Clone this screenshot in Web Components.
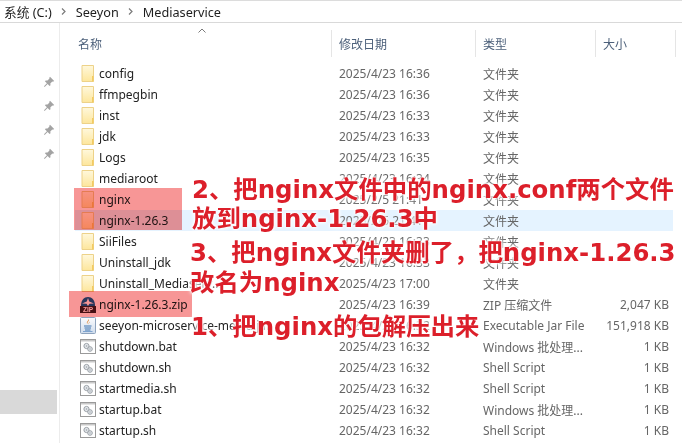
<!DOCTYPE html>
<html lang="zh">
<head>
<meta charset="utf-8">
<title>Mediaservice</title>
<style>
	html, body { margin: 0; padding: 0; background: #fff; }
	body { font-family: "Noto Sans", "Noto Sans CJK SC", sans-serif; overflow: hidden; }
</style>
</head>
<body>
<explorer-window>
	<address-bar slot="address"></address-bar>
	<nav-pane slot="nav"></nav-pane>
	<file-header slot="header"></file-header>
	<file-row icon="folder" name="config" date="2025/4/23 16:36" type="文件夹"></file-row>
	<file-row icon="folder" name="ffmpegbin" date="2025/4/23 16:36" type="文件夹"></file-row>
	<file-row icon="folder" name="inst" date="2025/4/23 16:33" type="文件夹"></file-row>
	<file-row icon="folder" name="jdk" date="2025/4/23 16:33" type="文件夹"></file-row>
	<file-row icon="folder" name="Logs" date="2025/4/23 16:35" type="文件夹"></file-row>
	<file-row icon="folder" name="mediaroot" date="2025/4/23 16:34" type="文件夹"></file-row>
	<file-row icon="folder" name="nginx" date="2025/2/5 21:41" type="文件夹"></file-row>
	<file-row icon="folder" name="nginx-1.26.3" date="2025/2/5 21:41" type="文件夹" hover></file-row>
	<file-row icon="folder" name="SiiFiles" date="2025/4/23 16:33" type="文件夹"></file-row>
	<file-row icon="folder" name="Uninstall_jdk" date="2025/4/23 16:33" type="文件夹"></file-row>
	<file-row icon="folder" name="Uninstall_Mediaserv..." date="2025/4/23 17:00" type="文件夹"></file-row>
	<file-row icon="zip" name="nginx-1.26.3.zip" date="2025/4/23 16:39" type="ZIP 压缩文件" size="2,047 KB"></file-row>
	<file-row icon="jar" name="seeyon-microservice-media.jar" date="2025/4/23 16:32" type="Executable Jar File" size="151,918 KB"></file-row>
	<file-row icon="script" name="shutdown.bat" date="2025/4/23 16:32" type="Windows 批处理..." size="1 KB"></file-row>
	<file-row icon="script" name="shutdown.sh" date="2025/4/23 16:32" type="Shell Script" size="1 KB"></file-row>
	<file-row icon="script" name="startmedia.sh" date="2025/4/23 16:32" type="Shell Script" size="1 KB"></file-row>
	<file-row icon="script" name="startup.bat" date="2025/4/23 16:32" type="Windows 批处理..." size="1 KB"></file-row>
	<file-row icon="script" name="startup.sh" date="2025/4/23 16:32" type="Shell Script" size="1 KB"></file-row>
	<mark-box slot="marks" x="74" y="188" w="108" h="42"></mark-box>
	<mark-box slot="marks" x="69" y="291" w="123" h="26"></mark-box>
	<note-label slot="marks" x="192" y="174">2、把nginx文件中的nginx.conf两个文件</note-label>
	<note-label slot="marks" x="192" y="203">放到nginx-1.26.3中</note-label>
	<note-label slot="marks" x="190" y="237">3、把nginx文件夹删了，把nginx-1.26.3</note-label>
	<note-label slot="marks" x="190" y="267">改名为nginx</note-label>
	<note-label slot="marks" x="191" y="311">1、把nginx的包解压出来</note-label>
</explorer-window>

<script>
const PIN = `<svg width="12" height="12" viewBox="0 0 12 12" aria-hidden="true"><path d="M7 .8l4.200 4.200-1.200.7-.7-.3-2 2 .2 1.800-.9.8-2-2-3 2.900-.6-.6 2.900-3-2-2 .8-.9 1.800.2 2-2-.3-.7z" fill="#a3a3a3"/></svg>`

const ICONS = {
	folder: `<svg width="14" height="17" viewBox="0 0 14 17" aria-hidden="true">
		<defs><linearGradient id="f" x1="0" y1="0" x2="0" y2="1"><stop offset="0" stop-color="#fff8dc"/><stop offset="1" stop-color="#fde69c"/></linearGradient></defs>
		<path d="M1 .5h11.500v16H1z" fill="url(#f)" stroke="#edd289"/>
		<path d="M11 11h1.500v5.500H11z" fill="#f3cb62"/>
	</svg>`,
	zip: `<svg width="16" height="17" viewBox="0 0 16 17" aria-hidden="true">
		<path d="M1 10C1 4 4 1 8 1s7 3 7 9z" fill="#2a5c9a"/>
		<path d="M8 2l1.200 3.500L14 7.500l-4.600.2L8 10 6.600 7.700 2 7.500l4.800-2z" fill="#fff"/>
		<rect x="0" y="10" width="16" height="7" fill="#4a1a20"/>
		<text x="8" y="16" text-anchor="middle" font-family="Liberation Sans, sans-serif" font-size="6.500" font-weight="700" fill="#fff">ZIP</text>
	</svg>`,
	jar: `<svg width="16" height="17" viewBox="0 0 16 17" aria-hidden="true">
		<defs><linearGradient id="j" x1="0" y1="0" x2="0" y2="1"><stop offset="0" stop-color="#fbfcfe"/><stop offset="1" stop-color="#cfdcec"/></linearGradient></defs>
		<rect x=".5" y=".5" width="15" height="16" rx="1" fill="url(#j)" stroke="#8ea3bd"/>
		<path d="M8.500 2C10 4 6.500 5 7.500 7c-2-1.500 1-3 1-5zM10 4.500C9.500 6 8.500 6 9 7.500 8 6.500 9 5.500 10 4.500z" fill="#dd7a1e"/>
		<path d="M4 9h7.500M4.500 11h6.500M5 13h5.500" stroke="#3f74b0" stroke-width="1.100" fill="none"/>
		<path d="M3 14.500h9.500" stroke="#7fa4cf" stroke-width="1"/>
	</svg>`,
	script: `<svg width="16" height="15" viewBox="0 0 16 15" aria-hidden="true">
		<rect x=".5" y=".5" width="15" height="14" fill="#fff" stroke="#9a9a9a"/>
		<rect x="1" y="1" width="14" height="1.500" fill="#c9c9c9"/>
		<circle cx="6.500" cy="7" r="2.600" fill="#e4e8ec" stroke="#9aa0a6"/>
		<circle cx="10" cy="10" r="2.300" fill="#e4e8ec" stroke="#9aa0a6"/>
		<circle cx="6.500" cy="7" r=".8" fill="#9aa0a6"/>
		<circle cx="10" cy="10" r=".7" fill="#9aa0a6"/>
	</svg>`
}

class ExplorerWindow extends HTMLElement {
	constructor() {
		super()
		this.attachShadow({ mode: 'open' })
		this.shadowRoot.innerHTML = `
			<style>
				:host { display: block; position: relative; width: 682px; height: 443px; overflow: hidden; background: #fff; }
				.main { display: flex; }
				.list { flex: 1; display: flex; flex-direction: column; }
				.rows { display: flex; flex-direction: column; padding-left: 15px; padding-right: 9px; }
			</style>
			<slot name="address"></slot>
			<div class="main">
				<slot name="nav"></slot>
				<div class="list">
					<slot name="header"></slot>
					<div class="rows"><slot></slot></div>
				</div>
			</div>
			<slot name="marks"></slot>
		`
	}
}

class AddressBar extends HTMLElement {
	constructor() {
		super()
		this.attachShadow({ mode: 'open' })
		this.shadowRoot.innerHTML = `
			<style>
				:host { display: flex; align-items: center; box-sizing: border-box; height: 23px; padding-left: 4px; border-top: 1px solid #dcdcdc; border-bottom: 1px solid #d9d9d9; font-size: 12.7px; color: #1e1e1e; }
				svg { margin: 0 10px 0 9px; }
			</style>
			<span>系统 (C:)</span>
			<svg width="5" height="7" viewBox="0 0 5 7"><path d="M1 .5L4 3.500 1 6.500" fill="none" stroke="#7a7a7a" stroke-width="1.200"/></svg>
			<span>Seeyon</span>
			<svg width="5" height="7" viewBox="0 0 5 7"><path d="M1 .5L4 3.500 1 6.500" fill="none" stroke="#7a7a7a" stroke-width="1.200"/></svg>
			<span>Mediaservice</span>
		`
	}
}

class NavPane extends HTMLElement {
	constructor() {
		super()
		this.attachShadow({ mode: 'open' })
		this.shadowRoot.innerHTML = `
			<style>
				:host { display: flex; flex-direction: column; box-sizing: border-box; width: 60px; height: 420px; border-right: 1px solid #ececec; }
				.pins { display: flex; flex-direction: column; align-items: flex-end; gap: 12px; padding: 53px 4px 0 0; margin-top: -5px; }
				.pins span { display: block; height: 12px; }
				.selected { width: 57px; height: 24px; margin-top: 235px; background: #d9d9d9; }
			</style>
			<div class="pins">
				<span>${PIN}</span><span>${PIN}</span><span>${PIN}</span><span>${PIN}</span>
			</div>
			<div class="selected"></div>
		`
	}
}

class FileHeader extends HTMLElement {
	constructor() {
		super()
		this.attachShadow({ mode: 'open' })
		this.shadowRoot.innerHTML = `
			<style>
				:host { display: block; position: relative; box-sizing: border-box; height: 40px; padding-top: 7px; font-size: 12px; color: #4c607a; }
				.cols { display: grid; grid-template-columns: 272px 144px 120px 80px; height: 27px; }
				.cols > div { display: flex; align-items: center; padding-left: 7px; border-right: 1px solid #e5e5e5; box-sizing: border-box; }
				.cols > div:first-child { padding-left: 18px; }
				.caret { position: absolute; left: 138px; top: 5px; }
			</style>
			<svg class="caret" width="8" height="5" viewBox="0 0 8 5"><path d="M.5 4.500L4 1l3.500 3.500" fill="none" stroke="#7a7a7a"/></svg>
			<div class="cols"><div>名称</div><div>修改日期</div><div>类型</div><div>大小</div></div>
		`
	}
}

class FileRow extends HTMLElement {
	constructor() {
		super()
		this.attachShadow({ mode: 'open' })
	}

	connectedCallback() {
		const a = name => this.getAttribute(name) || ''
		this.shadowRoot.innerHTML = `
			<style>
				:host { display: grid; grid-template-columns: 24px 240px 144px 114px 76px; align-items: center; height: 21px; font-size: 12px; color: #666; white-space: nowrap; }
				:host([hover]) { background: #e5f3ff; }
				.icon { display: flex; justify-content: center; padding-left: 1px; }
				.name { color: #222; overflow: visible; }
				.size { text-align: right; padding-right: 4px; }
			</style>
			<div class="icon">${ICONS[a('icon')] || ''}</div>
			<div class="name">${a('name')}</div>
			<div class="date">${a('date')}</div>
			<div class="type">${a('type')}</div>
			<div class="size">${a('size')}</div>
		`
	}
}

// pink highlight boxes, multiplied so the names under them stay dark
class MarkBox extends HTMLElement {
	constructor() {
		super()
		this.attachShadow({ mode: 'open' })
	}

	connectedCallback() {
		const a = name => this.getAttribute(name)
		this.shadowRoot.innerHTML = `
			<style>
				:host { display: block; position: absolute; left: ${a('x')}px; top: ${a('y')}px; width: ${a('w')}px; height: ${a('h')}px; background: #f79696; mix-blend-mode: multiply; }
			</style>
		`
	}
}

class NoteLabel extends HTMLElement {
	constructor() {
		super()
		this.attachShadow({ mode: 'open' })
	}

	connectedCallback() {
		const a = name => this.getAttribute(name)
		this.shadowRoot.innerHTML = `
			<style>
				:host { display: block; position: absolute; left: ${a('x')}px; top: ${a('y')}px; font-family: "DejaVu Sans", "Noto Sans CJK SC", sans-serif; font-size: 24.4px; font-weight: 700; line-height: 32px; white-space: nowrap; color: #dc1f2a; text-shadow: 0 0 2px #fff, 0 0 3px #fff, 0 0 4px #fff, 0 0 5px #fff; }
			</style>
			<slot></slot>
		`
	}
}

customElements.define('explorer-window', ExplorerWindow)
customElements.define('address-bar', AddressBar)
customElements.define('nav-pane', NavPane)
customElements.define('file-header', FileHeader)
customElements.define('file-row', FileRow)
customElements.define('mark-box', MarkBox)
customElements.define('note-label', NoteLabel)
</script>
</body>
</html>
